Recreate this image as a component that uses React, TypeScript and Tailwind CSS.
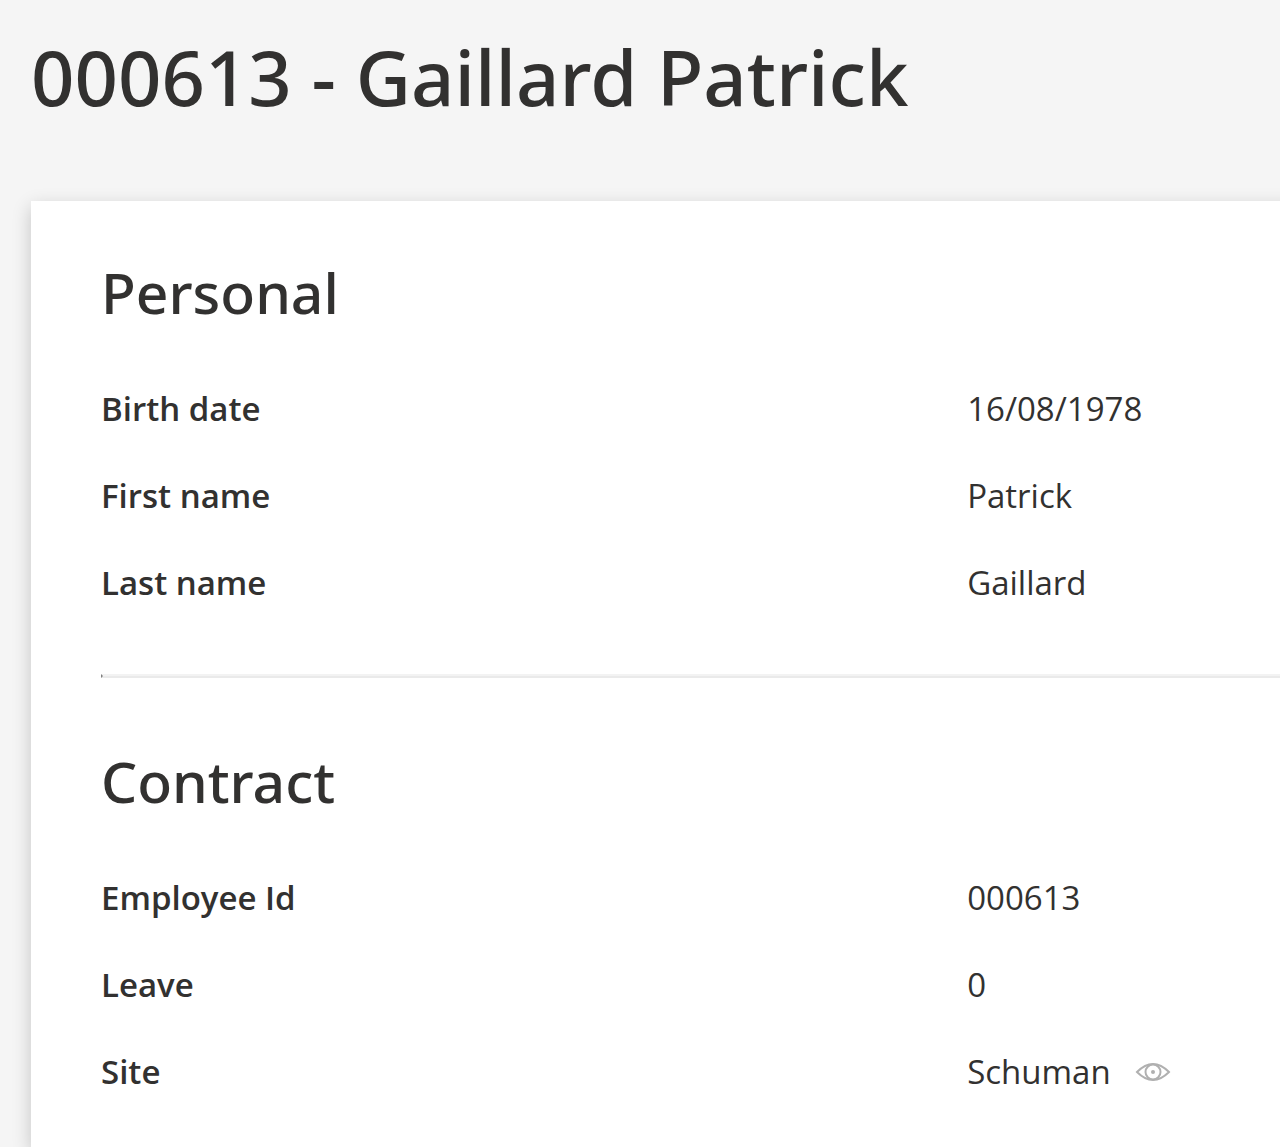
type Field = { label: string; value: string; view?: boolean };

const personal: Field[] = [
  { label: 'Birth date', value: '16/08/1978' },
  { label: 'First name', value: 'Patrick' },
  { label: 'Last name', value: 'Gaillard' },
];

const contract: Field[] = [
  { label: 'Employee Id', value: '000613' },
  { label: 'Leave', value: '0' },
  { label: 'Site', value: 'Schuman', view: true },
];

function EyeIcon() {
  return (
    <svg viewBox="0 0 36 20" className="h-5 w-9" fill="none" stroke="currentColor" strokeWidth="2" aria-hidden="true">
      <path d="M2 10 C7 5 12 2 18 2 C24 2 29 5 34 10 C29 15 24 18 18 18 C12 18 7 15 2 10 Z" />
      <circle cx="18" cy="10" r="7.5" />
      <circle cx="18" cy="10" r="2" fill="currentColor" stroke="none" />
    </svg>
  );
}

function Section({ title, fields }: { title: string; fields: Field[] }) {
  return (
    <section>
      <h2 className="font-['Noto_Sans',sans-serif] text-[57px] leading-[78px] font-medium">{title}</h2>
      <dl className="mt-[34px]">
        {fields.map((f) => (
          <div key={f.label} className="flex h-[87px] items-center text-[33px] leading-[48px]">
            <dt className="w-[72%] shrink-0 font-semibold">{f.label}</dt>
            <dd className="flex items-center gap-6">
              {f.value}
              {f.view && (
                <button type="button" aria-label={`View ${f.value}`} className="text-[#b0b0b0]">
                  <EyeIcon />
                </button>
              )}
            </dd>
          </div>
        ))}
      </dl>
    </section>
  );
}

export default function App() {
  return (
    <div className="min-h-screen overflow-hidden bg-[#f5f5f5] pl-[31px] font-['Open_Sans','Noto_Sans',sans-serif] text-[#323130]">
      <h1 className="pt-[25px] font-['Noto_Sans',sans-serif] text-[76px] leading-[104px] font-medium">
        000613 - Gaillard Patrick
      </h1>
      <main className="-mr-6 mt-[72px] min-h-[calc(100vh-201px)] bg-white pt-[52px] pl-[70px] shadow-[0_6px_18px_rgba(0,0,0,0.2)]">
        <Section title="Personal" fields={personal} />
        <hr className="mt-[48px] mb-[64px] h-1 border-t-2 border-b-2 border-l-2 border-t-[#f3f3f3] border-b-[#eaeaea] border-l-[#808080]" />
        <Section title="Contract" fields={contract} />
      </main>
    </div>
  );
}
